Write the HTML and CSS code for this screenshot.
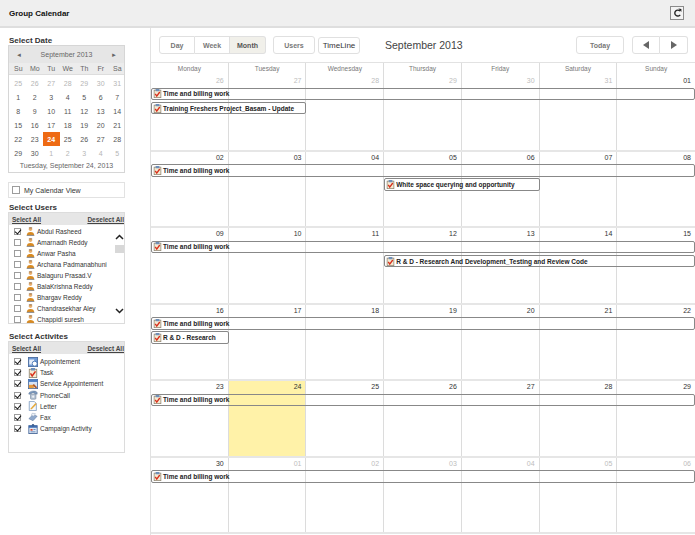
FILE: index.html
```html
<!DOCTYPE html>
<html lang="en">
<head>
<meta charset="utf-8">
<title>Group Calendar</title>
<link rel="stylesheet" href="styles.css">
</head>
<body>
<svg class="defs" width="0" height="0" aria-hidden="true">
  <defs>
    <symbol id="i-task" viewBox="0 0 12 12">
      <rect x="1.5" y="1.500" width="9" height="10" fill="#f5ead2" stroke="#8f8470"/>
      <rect x="3.500" y="0" width="5" height="3" fill="#6f8fb8"/>
      <path d="M3 6.500l2 3L9 4" fill="none" stroke="#d8301c" stroke-width="1.800"/>
    </symbol>
    <symbol id="i-user" viewBox="0 0 12 12">
      <circle cx="6" cy="3" r="2.200" fill="#e8b070"/>
      <path d="M3.500 1.500h5L8 .5H4z" fill="#7a4a18"/>
      <path d="M1 11.500c0-4 2-5 5-5s5 1 5 5z" fill="#d98a20"/>
      <rect x="1" y="10.500" width="10" height="1.200" fill="#7b8da8"/>
    </symbol>
    <symbol id="i-appt" viewBox="0 0 12 12">
      <rect x=".5" y=".5" width="11" height="11" fill="#6f9bd6" stroke="#47699c"/>
      <rect x="1.500" y="3" width="6" height="6" fill="#e6eefa"/>
      <circle cx="8" cy="8" r="3" fill="#fff" stroke="#3b6cb0"/>
    </symbol>
    <symbol id="i-service" viewBox="0 0 12 12">
      <rect x=".5" y=".5" width="11" height="11" fill="#d7e3f4" stroke="#47699c"/>
      <rect x=".5" y=".5" width="11" height="3" fill="#4d7fc4"/>
      <path d="M1 7h6v4H1z" fill="#e59a3c"/>
      <path d="M7 6l4 4-1.500 1.500-4-4z" fill="#b05a28"/>
    </symbol>
    <symbol id="i-phone" viewBox="0 0 12 12">
      <path d="M1 4c1-3 8-4 10-1v2H8V3.500H4V5H1z" fill="#7f9cc0" stroke="#55708f" stroke-width=".5"/>
      <rect x="3" y="5" width="6.500" height="6" rx="1" fill="#b9c6d6" stroke="#6c7f96" stroke-width=".7"/>
      <circle cx="6.200" cy="8" r="1.300" fill="#eef2f6"/>
    </symbol>
    <symbol id="i-letter" viewBox="0 0 12 12">
      <path d="M1.500.5h6l2.500 2.500v8.500h-8.500z" fill="#f6f9fd" stroke="#7f9cc0"/>
      <path d="M3 9l6-6.500 1.500 1.200L4.500 10H3z" fill="#e5a93a"/>
    </symbol>
    <symbol id="i-fax" viewBox="0 0 12 12">
      <path d="M1 8l5-5 5 2-5 5.500z" fill="#8fa9cc" stroke="#5f7a9e" stroke-width=".6"/>
      <path d="M5 1.500l4 .5-2 3-3-1z" fill="#eef3fa" stroke="#8296b0" stroke-width=".5"/>
    </symbol>
    <symbol id="i-campaign" viewBox="0 0 12 12">
      <rect x="1" y="2" width="10" height="9.500" fill="#dfe8f5" stroke="#3e5f92"/>
      <rect x="1" y="2" width="10" height="2.500" fill="#3e6cb0"/>
      <path d="M3 6h2.500v2H3z" fill="#d8452c"/>
      <path d="M6.500 6H9v1H6.500zM3 9h6v1H3z" fill="#4a72ac"/>
      <circle cx="6" cy="1.500" r="1.500" fill="#3e5f92"/>
    </symbol>
  </defs>
</svg>

<header class="topbar">
  <h1 class="title">Group Calendar</h1>
  <button class="refresh" type="button" aria-label="Refresh">
    <svg width="9" height="10" viewBox="0 0 10 11"><path d="M7.800 3.400A3.300 3.300 0 1 0 8 7.500" fill="none" stroke="#222" stroke-width="1.500"/><path d="M6 .5L9.300 1v3.400z" fill="#222"/></svg>
  </button>
</header>

<div class="layout">
  <aside class="sidebar">
    <h2 class="side-title">Select Date</h2>
    <div class="mini">
      <div class="mini-head"><span class="mini-arrow">◄</span><span>September 2013</span><span class="mini-arrow">►</span></div>
      <div class="mini-grid mini-days"><span>Su</span><span>Mo</span><span>Tu</span><span>We</span><span>Th</span><span>Fr</span><span>Sa</span></div>
      <div class="mini-grid mini-dates">
        <span class="off">25</span><span class="off">26</span><span class="off">27</span><span class="off">28</span><span class="off">29</span><span class="off">30</span><span class="off">31</span>
        <span>1</span><span>2</span><span>3</span><span>4</span><span>5</span><span>6</span><span>7</span>
        <span>8</span><span>9</span><span>10</span><span>11</span><span>12</span><span>13</span><span>14</span>
        <span>15</span><span>16</span><span>17</span><span>18</span><span>19</span><span>20</span><span>21</span>
        <span>22</span><span>23</span><span class="sel">24</span><span>25</span><span>26</span><span>27</span><span>28</span>
        <span>29</span><span>30</span><span class="off">1</span><span class="off">2</span><span class="off">3</span><span class="off">4</span><span class="off">5</span>
      </div>
      <div class="mini-foot">Tuesday, September 24, 2013</div>
    </div>

    <label class="my-view"><span class="cb"></span>My Calendar View</label>

    <h2 class="side-title users-title">Select Users</h2>
    <div class="panel users-panel">
      <div class="panel-head"><a>Select All</a><a>Deselect All</a></div>
      <div class="users-body">
        <ul class="list users-list">
          <li><span class="cb on"></span><svg class="ic"><use href="#i-user"/></svg>Abdul Rasheed</li>
          <li><span class="cb"></span><svg class="ic"><use href="#i-user"/></svg>Amarnadh Reddy</li>
          <li><span class="cb"></span><svg class="ic"><use href="#i-user"/></svg>Anwar Pasha</li>
          <li><span class="cb"></span><svg class="ic"><use href="#i-user"/></svg>Archana Padmanabhuni</li>
          <li><span class="cb"></span><svg class="ic"><use href="#i-user"/></svg>Balaguru Prasad.V</li>
          <li><span class="cb"></span><svg class="ic"><use href="#i-user"/></svg>BalaKrishna Reddy</li>
          <li><span class="cb"></span><svg class="ic"><use href="#i-user"/></svg>Bhargav Reddy</li>
          <li><span class="cb"></span><svg class="ic"><use href="#i-user"/></svg>Chandrasekhar Aley</li>
          <li><span class="cb"></span><svg class="ic"><use href="#i-user"/></svg>Chappidi suresh</li>
        </ul>
        <div class="scroll">
          <svg width="9" height="6" viewBox="0 0 9 6"><path d="M1 5l3.500-3.500L8 5" fill="none" stroke="#222" stroke-width="1.500"/></svg>
          <span class="thumb"></span>
          <svg class="scroll-down" width="9" height="6" viewBox="0 0 9 6"><path d="M1 1l3.500 3.500L8 1" fill="none" stroke="#222" stroke-width="1.500"/></svg>
        </div>
      </div>
    </div>

    <h2 class="side-title act-title">Select Activites</h2>
    <div class="panel act-panel">
      <div class="panel-head"><a>Select All</a><a>Deselect All</a></div>
      <ul class="list act-list">
        <li><span class="cb on"></span><svg class="ic"><use href="#i-appt"/></svg>Appointement</li>
        <li><span class="cb on"></span><svg class="ic"><use href="#i-task"/></svg>Task</li>
        <li><span class="cb on"></span><svg class="ic"><use href="#i-service"/></svg>Service Appointement</li>
        <li><span class="cb on"></span><svg class="ic"><use href="#i-phone"/></svg>PhoneCall</li>
        <li><span class="cb on"></span><svg class="ic"><use href="#i-letter"/></svg>Letter</li>
        <li><span class="cb on"></span><svg class="ic"><use href="#i-fax"/></svg>Fax</li>
        <li><span class="cb on"></span><svg class="ic"><use href="#i-campaign"/></svg>Campaign Activity</li>
      </ul>
    </div>
  </aside>

  <main class="main">
    <div class="toolbar">
      <div class="btn-group group-views"><button class="btn" type="button">Day</button><button class="btn" type="button">Week</button><button class="btn active" type="button">Month</button></div>
      <button class="btn solo users-btn" type="button">Users</button>
      <button class="btn solo timeline" type="button">TimeLine</button>
      <span class="month-title">September 2013</span>
      <button class="btn solo today" type="button">Today</button>
      <div class="btn-group group-nav"><button class="btn" type="button"><span class="tri left"></span></button><button class="btn" type="button"><span class="tri right"></span></button></div>
    </div>

    <div class="dow"><span>Monday</span><span>Tuesday</span><span>Wednesday</span><span>Thursday</span><span>Friday</span><span>Saturday</span><span>Sunday</span></div>

    <section class="week">
      <div class="day off">26</div><div class="day off">27</div><div class="day off">28</div><div class="day off">29</div><div class="day off">30</div><div class="day off">31</div><div class="day">01</div>
      <div class="ev c1 s7 r1"><svg class="ic"><use href="#i-task"/></svg><span>Time and billing work</span></div>
      <div class="ev c1 s2 r2"><svg class="ic"><use href="#i-task"/></svg><span>Training Freshers Project_Basam - Update</span></div>
    </section>
    <section class="week">
      <div class="day">02</div><div class="day">03</div><div class="day">04</div><div class="day">05</div><div class="day">06</div><div class="day">07</div><div class="day">08</div>
      <div class="ev c1 s7 r1"><svg class="ic"><use href="#i-task"/></svg><span>Time and billing work</span></div>
      <div class="ev c4 s2 r2"><svg class="ic"><use href="#i-task"/></svg><span>White space querying and opportunity</span></div>
    </section>
    <section class="week">
      <div class="day">09</div><div class="day">10</div><div class="day">11</div><div class="day">12</div><div class="day">13</div><div class="day">14</div><div class="day">15</div>
      <div class="ev c1 s7 r1"><svg class="ic"><use href="#i-task"/></svg><span>Time and billing work</span></div>
      <div class="ev c4 s4 r2"><svg class="ic"><use href="#i-task"/></svg><span>R &amp; D - Research And Development_Testing and Review Code</span></div>
    </section>
    <section class="week">
      <div class="day">16</div><div class="day">17</div><div class="day">18</div><div class="day">19</div><div class="day">20</div><div class="day">21</div><div class="day">22</div>
      <div class="ev c1 s7 r1"><svg class="ic"><use href="#i-task"/></svg><span>Time and billing work</span></div>
      <div class="ev c1 s1 r2"><svg class="ic"><use href="#i-task"/></svg><span>R &amp; D - Research</span></div>
    </section>
    <section class="week">
      <div class="day">23</div><div class="day today-cell">24</div><div class="day">25</div><div class="day">26</div><div class="day">27</div><div class="day">28</div><div class="day">29</div>
      <div class="ev c1 s7 r1"><svg class="ic"><use href="#i-task"/></svg><span>Time and billing work</span></div>
    </section>
    <section class="week">
      <div class="day">30</div><div class="day off">01</div><div class="day off">02</div><div class="day off">03</div><div class="day off">04</div><div class="day off">05</div><div class="day off">06</div>
      <div class="ev c1 s7 r1"><svg class="ic"><use href="#i-task"/></svg><span>Time and billing work</span></div>
    </section>
  </main>
</div>
</body>
</html>
```
FILE: styles.css
```css
* { box-sizing: border-box; }
html, body { margin: 0; padding: 0; height: 100%; overflow: hidden; }
body { background: #fff; color: #333; font-family: "Liberation Sans", Arial, sans-serif; font-size: 7px; }
.defs { position: absolute; }
ul { list-style: none; margin: 0; padding: 0; }
h1, h2 { margin: 0; }
button { font-family: inherit; cursor: pointer; }

.topbar { height: 28px; background: #efefef; border-bottom: 2px solid #dedede; display: flex; align-items: center; justify-content: space-between; padding: 0 11px 0 9px; }
.title { font-size: 8px; font-weight: bold; color: #111; }
.refresh { width: 14px; height: 14px; padding: 0; display: flex; align-items: center; justify-content: center; background: #f4f4f4; border: 1px solid #8b8b8b; }

.layout { display: flex; height: 507px; }
.sidebar { width: 151px; flex: none; padding: 8px 25px 0 8px; border-right: 1px solid #e2e2e2; }
.side-title { font-size: 8px; line-height: 9px; font-weight: bold; color: #333; padding-left: 1px; }

.mini { width: 117px; background: #fff; border: 1px solid #d6d6d6; font-size: 7px; color: #555; }
.mini-head { height: 17px; display: flex; align-items: center; justify-content: space-between; padding: 0 7px; background: #e6e6e6; color: #666; }
.mini-arrow { font-size: 6px; }
.mini-grid { display: grid; grid-template-columns: repeat(7, 16.500px); padding: 0 0 0 1px; text-align: center; }
.mini-days { height: 12px; align-items: center; background: #ececec; color: #666; border-bottom: 1px solid #ddd; }
.mini-dates { grid-auto-rows: 14px; align-items: center; margin-top: 1px; }
.mini-dates span { display: flex; align-items: center; justify-content: center; height: 14px; }
.mini-dates .off { color: #b5b5b5; }
.mini-dates .sel { background: #ee6a13; color: #fff; font-weight: bold; }
.mini-foot { height: 12px; line-height: 11px; text-align: center; color: #666; }

.my-view { width: 117px; height: 16px; margin-top: 9px; display: flex; align-items: center; gap: 4px; padding-left: 3px; border: 1px solid #e2e2e2; font-size: 7px; color: #333; }
.cb { width: 7px; height: 7px; flex: none; display: block; background: #fff; border: 1px solid #9c9c9c; position: relative; }
.cb.on::after { content: ""; position: absolute; left: 1px; top: -1px; width: 3px; height: 5px; border: solid #111; border-width: 0 1.500px 1.500px 0; transform: rotate(40deg); }
.my-view .cb { width: 8px; height: 8px; }

.users-title { margin-top: 5px; }
.act-title { margin-top: 8px; }
.panel { width: 117px; border: 1px solid #dcdcdc; background: #fff; }
.panel-head { height: 12px; display: flex; justify-content: space-between; align-items: center; padding: 0 0 0 3px; background: #e6e6e6; font-size: 6.500px; font-weight: bold; color: #444; }
.panel-head a { text-decoration: underline; }
.users-panel { height: 112px; overflow: hidden; }
.users-body { display: flex; height: 98px; margin-top: 1px; overflow: hidden; }
.list li { height: 11px; display: flex; align-items: center; font-size: 6.500px; color: #333; white-space: nowrap; }
.users-list { flex: 1; min-width: 0; padding-left: 5px; }
.users-list .cb { margin-right: 5px; }
.users-list .ic { width: 9px; height: 9px; margin-right: 2px; flex: none; }
.scroll { width: 10px; flex: none; display: flex; flex-direction: column; align-items: center; padding-top: 8px; }
.thumb { width: 9px; height: 8px; margin-top: 5px; flex: none; background: #d8d8d8; }
.scroll-down { margin-top: 55px; flex: none; }
.act-panel { height: 112px; }
.act-list { padding: 2px 0 0 5px; }
.act-list li { height: 11.170px; }
.act-list .cb { margin-right: 7px; }
.act-list .ic { width: 10px; height: 10px; margin-right: 2px; flex: none; }

.main { flex: 1; min-width: 0; }
.toolbar { height: 35px; display: flex; align-items: center; padding: 0 7px 0 8px; border-bottom: 1px solid #e2e2e2; }
.btn { height: 18px; padding: 0; border: 1px solid #e0e0e0; background: #fff; color: #777; font-size: 7px; font-weight: bold; }
.btn-group { display: flex; }
.btn-group .btn { border-left-width: 0; }
.btn-group .btn:first-child { border-left-width: 1px; border-radius: 3px 0 0 3px; }
.btn-group .btn:last-child { border-radius: 0 3px 3px 0; }
.btn.active { background: #f1f0ea; color: #555; }
.solo { border-radius: 3px; }
.group-views .btn:nth-child(1) { width: 36px; }
.group-views .btn:nth-child(2) { width: 35px; }
.group-views .btn:nth-child(3) { width: 36px; }
.users-btn { width: 42px; margin-left: 7px; }
.timeline { width: 42px; height: 17px; margin-left: 3px; color: #333; font-weight: normal; font-size: 8px; }
.month-title { margin-left: 25px; font-size: 10.500px; color: #444; }
.today { width: 48px; margin-left: auto; }
.group-nav { margin-left: 8px; }
.group-nav .btn { width: 28px; display: flex; align-items: center; justify-content: center; }
.tri { width: 0; height: 0; display: block; border: 4px solid transparent; }
.tri.left { border-left-width: 0; border-right: 6px solid #666; }
.tri.right { border-right-width: 0; border-left: 6px solid #666; }

.dow { height: 12px; display: grid; grid-template-columns: repeat(7, minmax(0, 1fr)); font-size: 6.500px; color: #777; text-align: center; line-height: 11px; }
.dow span { border-right: 1px solid #dcdcdc; }
.dow span:last-child { border-right: 0; }

.week { height: 76.500px; display: grid; grid-template-columns: repeat(7, minmax(0, 1fr)); grid-template-rows: 12.600px 14.400px 13px 1fr; border-bottom: 2px solid #e6e6e6; }
.day { grid-row: 1 / -1; text-align: right; padding: 2px 4px 0 0; font-size: 7px; color: #333; border-right: 1px solid #dcdcdc; }
.day:nth-child(1) { grid-column: 1; }
.day:nth-child(2) { grid-column: 2; }
.day:nth-child(3) { grid-column: 3; }
.day:nth-child(4) { grid-column: 4; }
.day:nth-child(5) { grid-column: 5; }
.day:nth-child(6) { grid-column: 6; }
.day:nth-child(7) { grid-column: 7; border-right: 0; }
.day.off { color: #bdbdbd; }
.day.today-cell { background: #fff2a8; }

.ev { height: 12.500px; display: flex; align-items: center; background: transparent; border: 1px solid #888; border-radius: 2px; font-size: 6.500px; font-weight: bold; color: #222; white-space: nowrap; padding-left: 1px; overflow: hidden; }
.ev .ic { width: 9px; height: 9px; margin-right: 1px; flex: none; }
.r1 { grid-row: 2; }
.r2 { grid-row: 3; }
.c1 { grid-column-start: 1; }
.c4 { grid-column-start: 4; }
.s1 { grid-column-end: span 1; }
.s2 { grid-column-end: span 2; }
.s4 { grid-column-end: span 4; }
.s7 { grid-column-end: span 7; }
```
